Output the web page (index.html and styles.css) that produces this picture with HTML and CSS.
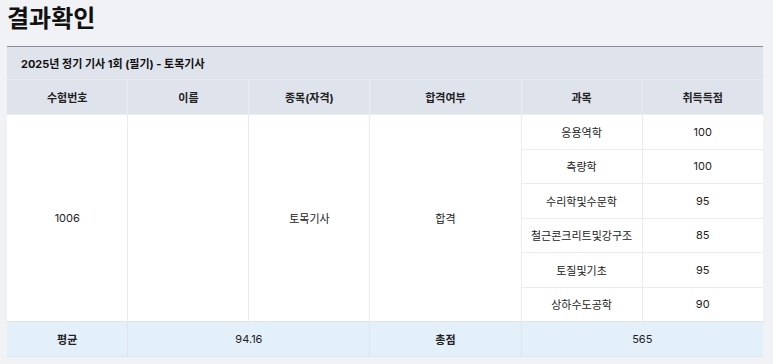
FILE: index.html
```html
<!DOCTYPE html>
<html lang="ko">
<head>
<meta charset="utf-8">
<link rel="stylesheet" href="styles.css">
</head>
<body>
<h1 class="title">결과확인</h1>
<table class="result">
  <colgroup>
    <col class="c16"><col class="c16"><col class="c16"><col class="c20"><col class="c16"><col class="c16">
  </colgroup>
  <thead>
    <tr><th colspan="6" class="caption">2025년 정기 기사 1회 (필기) - 토목기사</th></tr>
    <tr class="head">
      <th>수험번호</th><th>이름</th><th>종목(자격)</th><th>합격여부</th><th>과목</th><th>취득득점</th>
    </tr>
  </thead>
  <tbody>
    <tr>
      <td rowspan="6">1006</td><td rowspan="6"></td><td rowspan="6">토목기사</td><td rowspan="6">합격</td>
      <td>응용역학</td><td>100</td>
    </tr>
    <tr><td>측량학</td><td>100</td></tr>
    <tr><td>수리학및수문학</td><td>95</td></tr>
    <tr><td>철근콘크리트및강구조</td><td>85</td></tr>
    <tr><td>토질및기초</td><td>95</td></tr>
    <tr><td>상하수도공학</td><td>90</td></tr>
  </tbody>
  <tfoot>
    <tr>
      <th>평균</th><td colspan="2">94.16</td><th>총점</th><td colspan="2">565</td>
    </tr>
  </tfoot>
</table>
</body>
</html>
```
FILE: styles.css
```css
html, body {
  margin: 0;
  background: #f0f2f6;
}
body {
  padding: 0 10px 0 7px;
  font-family: Inter, "Noto Sans CJK KR", "Noto Sans", sans-serif;
  color: #222;
}
.title {
  margin: 0;
  height: 46px;
  padding-top: 2px;
  box-sizing: border-box;
  font-size: 24px;
  font-weight: 700;
  line-height: 34px;
  color: #111;
}
.result {
  width: 756px;
  border-collapse: collapse;
  table-layout: fixed;
  font-size: 11px;
  background: #fff;
  border-top: 1px solid #8a8d93;
}
.c16 { width: 16%; }
.c20 { width: 20%; }
.caption {
  background: #dfe3eb;
  text-align: left;
  height: 32px;
  padding: 0 0 0 14px;
  font-weight: 700;
  font-size: 11px;
  color: #111;
  border-bottom: 1px solid #e6e8ee;
}
.head th {
  background: #dee3ec;
  height: 34px;
  padding: 0;
  font-weight: 700;
  color: #222;
  border-left: 1px solid #e9ebef;
}
.head th:first-child { border-left: 0; }
tbody td {
  height: 33.5px;
  padding: 0;
  text-align: center;
  border-left: 1px solid #ececef;
  border-top: 1px solid #ececef;
  color: #222;
}
tbody tr:first-child td:first-child { border-left: 0; }
tfoot th, tfoot td {
  background: #e3eff9;
  height: 34px;
  padding: 0;
  text-align: center;
  border-left: 1px solid #dde4ec;
  border-top: 1px solid #dde4ec;
  border-bottom: 1px solid #dde4ec;
  color: #222;
}
tfoot th { font-weight: 700; }
tfoot th:first-child { border-left: 0; }
```
